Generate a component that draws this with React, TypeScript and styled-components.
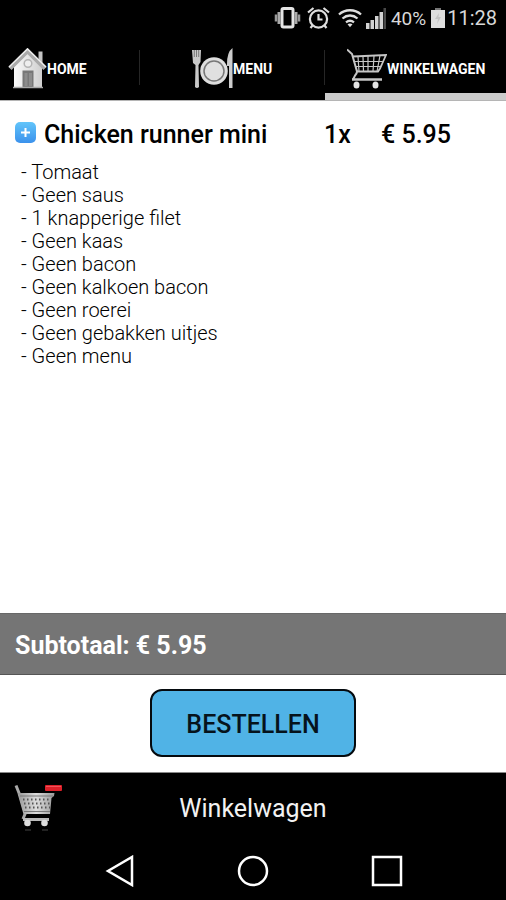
import React from "react";
import styled, { createGlobalStyle } from "styled-components";

const GlobalStyle = createGlobalStyle`
  *, *::before, *::after { box-sizing: border-box; }
  body { margin: 0; background: #fff; font-family: Roboto, "Liberation Sans", sans-serif; }
  button { font: inherit; padding: 0; border: 0; background: none; color: inherit; cursor: pointer; }
  svg { display: block; flex: none; }
  h1, h2, ul, p { margin: 0; padding: 0; }
`;

const Screen = styled.div`
  display: flex;
  flex-direction: column;
  min-height: 100vh;
  background: #fff;
  color: #000;
`;

const StatusBar = styled.div`
  display: flex;
  align-items: center;
  justify-content: flex-end;
  height: 36px;
  padding-right: 9px;
  background: #000;
  color: #d8d8d8;
  font-size: 19px;
`;

const StatusItem = styled.span<{ $gap: number }>`
  margin-left: ${(p) => p.$gap}px;
`;

const Clock = styled.time`
  margin-left: 2px;
  font-size: 20px;
`;

const Tabs = styled.nav`
  display: grid;
  grid-template-columns: 140fr 185fr 181fr;
  height: 65px;
  background: #000;
  color: #fff;
  border-bottom: 1px solid #b5b5b5;
`;

const Tab = styled.button<{ $inset: number; $active?: boolean }>`
  display: flex;
  align-items: center;
  height: 64px;
  padding-left: ${(p) => p.$inset}px;
  border-bottom: 7px solid ${(p) => (p.$active ? "#cbcbcb" : "#000")};
  font-size: 14px;
  font-weight: 700;
  background: linear-gradient(#262626, #262626) right 14px / 1px 35px no-repeat #000;

  &:last-child {
    background: #000;
  }

  svg {
    margin-top: 8px;
  }

  span {
    margin-top: 8px;
  }
`;

const Order = styled.main`
  flex: 1;
  padding: 16px 15px;
`;

const ProductRow = styled.div`
  display: grid;
  grid-template-columns: 21px 272px 49px 1fr;
  column-gap: 8px;
  align-items: center;
  height: 34px;
  font-size: 25px;
  font-weight: 500;
`;

const ProductName = styled.h1`
  font-size: inherit;
  font-weight: inherit;
`;

const AddButton = styled.button`
  width: 21px;
  height: 21px;
  margin-bottom: 3px;
`;

const Options = styled.ul`
  padding: 10px 6px;
  list-style: none;
  font-size: 20px;
  font-weight: 300;
  line-height: 23px;
  color: #000;
`;

const Subtotal = styled.div`
  display: flex;
  align-items: center;
  height: 62px;
  padding: 3px 15px 0;
  background: #757575;
  border-top: 1px solid #686868;
  border-bottom: 1px solid #555;
  color: #fff;
  font-size: 25px;
  font-weight: 700;
`;

const Actions = styled.div`
  display: flex;
  justify-content: center;
  padding: 14px 0 15px;
`;

const OrderButton = styled.button`
  height: 68px;
  padding: 2px 34px 0;
  border: 2px solid #050a0e;
  border-radius: 12px;
  background: #50b3e6;
  color: #06131c;
  font-size: 25px;
  font-weight: 500;
`;

const TitleBar = styled.footer`
  display: grid;
  grid-template-columns: 64px 1fr 64px;
  align-items: center;
  height: 71px;
  background: #000;
  border-top: 1px solid #888;
  color: #f2f2f2;
`;

const CartButton = styled.button`
  padding-left: 14px;
`;

const PageTitle = styled.h2`
  text-align: center;
  font-size: 25px;
  font-weight: 400;
`;

const SystemNav = styled.nav`
  display: flex;
  justify-content: center;
  gap: 102px;
  height: 57px;
  background: #000;
  color: #fff;
`;

const SystemButton = styled.button`
  display: flex;
  align-items: center;
  height: 56px;
`;

const options = [
  "Tomaat",
  "Geen saus",
  "1 knapperige filet",
  "Geen kaas",
  "Geen bacon",
  "Geen kalkoen bacon",
  "Geen roerei",
  "Geen gebakken uitjes",
  "Geen menu",
];

const VibrateIcon = () => (
  <svg width="27" height="22" viewBox="0 0 27 22" aria-hidden="true">
    <rect x="8" y="1.5" width="11" height="18.5" rx="1.5" fill="none" stroke="#e4e4e4" strokeWidth="3" />
    <path d="M5 5v12M22 5v12" stroke="#aaa" strokeWidth="3" />
    <path d="M2 7.500v7M25 7.500v7" stroke="#999" strokeWidth="2.500" />
  </svg>
);

const AlarmIcon = () => (
  <svg width="23" height="22" viewBox="0 0 23 22" fill="none" stroke="#dedede" strokeWidth="2.2" aria-hidden="true">
    <circle cx="11.5" cy="12" r="8.6" />
    <path d="M1 5.5 6.5 1M22 5.5 16.500 1M11.500 7v5.500h4M5.500 18.500 3.500 21M17.500 18.500l2 2.500" />
  </svg>
);

const WifiIcon = () => (
  <svg width="24" height="20" viewBox="0 0 24 20" fill="none" stroke="#dedede" strokeWidth="2.3" aria-hidden="true">
    <path d="M1 6.500C7 .8 17 .8 23 6.500M4.500 10.500c4.500-4 10.500-4 15 0M8 14.300c2.500-2 5.500-2 8 0" />
    <path d="m9.500 16.200 2.500 3 2.500-3q-2.500-1.500-5 0Z" fill="#dedede" stroke="none" />
  </svg>
);

const SignalIcon = () => (
  <svg width="20" height="21" viewBox="0 0 20 21" aria-hidden="true">
    <path d="M0 15h3.500v6H0zM4.500 12H8v9H4.500zM9 8h3.500v13H9zM13.500 4H17v17h-3.500z" fill="#d2d2d2" />
    <path d="M17.500 0H20v21h-2.500z" fill="#484848" />
  </svg>
);

const BatteryIcon = () => (
  <svg width="14" height="20" viewBox="0 0 14 20" aria-hidden="true">
    <path d="M4 0h6v3H4z" fill="#777" />
    <path d="M0 2h14v18H0z" fill="#dedede" />
    <path d="M8 5 4 11h3l-1 5 4-7H7.500Z" fill="#c4c4c4" />
  </svg>
);

const HouseIcon = () => (
  <svg width="39" height="41" viewBox="0 0 39 41" aria-hidden="true">
    <defs>
      <linearGradient id="wall" x2="1">
        <stop stopColor="#fafafa" />
        <stop offset="1" stopColor="#cfcfcf" />
      </linearGradient>
    </defs>
    <path d="M30.500 3.500h4v12h-4z" fill="#c4c4c4" />
    <path d="M6 18 19.500 5 34 19v20.500H6Z" fill="url(#wall)" />
    <path d="M2 20.500 19.500 3 37 20.500" fill="none" stroke="#aaa" strokeWidth="4.500" />
    <path d="M1 19 19.500 1 38 19" fill="none" stroke="#eee" strokeWidth="1.500" />
    <circle cx="20" cy="15.500" r="3.800" fill="#eee" stroke="#b4b4b4" strokeWidth="1.500" />
    <path d="M14.500 22.500h11v17h-11z" fill="#777" />
    <path d="M16.500 25h3v13h-3zM21 25h3v13h-3z" fill="#8c8c8c" />
    <path d="M5 39.500h30" stroke="#aaa" strokeWidth="1.500" />
  </svg>
);

const PlateIcon = () => (
  <svg width="41" height="41" viewBox="0 0 41 41" aria-hidden="true">
    <path d="M0 2h9l-.5 12L6.500 17 7 39q-2 2-4 0l.5-22L1 15Z" fill="#c9c9c9" />
    <path d="M2.300 2v7M4.500 2v7M6.700 2v7" stroke="#666" strokeWidth=".8" />
    <circle cx="22" cy="23" r="13.800" fill="#dedede" />
    <circle cx="22" cy="23" r="10" fill="#e0e0e0" stroke="#777" strokeWidth="1.500" />
    <path d="M35 16q0-12 5.500-16v40H37V18h-2Z" fill="#ccc" />
  </svg>
);

const WireCartIcon = () => (
  <svg width="40" height="41" viewBox="0 0 40 41" fill="none" stroke="#c6c6c6" aria-hidden="true">
    <path d="M0 1.500 5 6l5 17.500q0 2-2 4l-2 4" strokeWidth="2" />
    <path d="M6 8.500 39 7q-3 7-6 13.500l-2 3H9" strokeWidth="1.800" />
    <path d="M8 13.500h28M9 18.500h25M11 8.500l1 15M16 8.500l.5 15M21 8v15.500M27 8l-1 15.500M33 7.500l-3 16" strokeWidth="1.200" />
    <path d="M5 31.500h30" strokeWidth="2.500" />
    <ellipse cx="9.500" cy="37" rx="3" ry="3.600" fill="#e4e4e4" stroke="none" />
    <ellipse cx="28.500" cy="37" rx="3" ry="3.600" fill="#e4e4e4" stroke="none" />
  </svg>
);

const PlusIcon = () => (
  <svg width="21" height="21" viewBox="0 0 21 21" aria-hidden="true">
    <defs>
      <linearGradient id="plus" x2="0" y2="1">
        <stop stopColor="#62c5fa" />
        <stop offset="1" stopColor="#3b91ec" />
      </linearGradient>
    </defs>
    <rect width="21" height="21" rx="5" fill="url(#plus)" />
    <path d="M10.500 6v9M6 10.500h9" stroke="#fff" strokeWidth="2" />
  </svg>
);

const FullCartIcon = () => (
  <svg width="48" height="48" viewBox="0 0 48 48" aria-hidden="true">
    <defs>
      <linearGradient id="basket">
        <stop stopColor="#999" />
        <stop offset=".5" stopColor="#ddd" />
        <stop offset="1" stopColor="#999" />
      </linearGradient>
    </defs>
    <path d="M2 1.500 5 9l6 21-2 5" fill="none" stroke="#a9a9a9" strokeWidth="3" />
    <path d="M4 9h36.500l-.5 3-2.500 2L36 30H10Z" fill="url(#basket)" />
    <path d="M9 15.500h28M10 19.500h26M11 23.500h25" fill="none" stroke="#555" strokeWidth="2" strokeDasharray="1.500 2.500" />
    <path d="M6 12h33M10 27.500h26" stroke="#777" strokeWidth="1" />
    <path d="M9 35.500h26" stroke="#bababa" strokeWidth="3" />
    <circle cx="13.500" cy="39" r="3.300" fill="#ddd" />
    <circle cx="30.500" cy="39" r="3.300" fill="#ddd" />
    <path d="M11 46h6M28 46h6" stroke="#222" strokeWidth="2" />
    <rect x="31" y="1" width="17" height="6" rx="1" fill="#dc2029" />
    <path d="M32 2.500h15" stroke="#f0535a" />
  </svg>
);

export default function App() {
  return (
    <Screen>
      <GlobalStyle />
      <StatusBar>
        <VibrateIcon />
        <StatusItem $gap={6}><AlarmIcon /></StatusItem>
        <StatusItem $gap={8}><WifiIcon /></StatusItem>
        <StatusItem $gap={4}><SignalIcon /></StatusItem>
        <StatusItem $gap={5}>40%</StatusItem>
        <StatusItem $gap={5}><BatteryIcon /></StatusItem>
        <Clock>11:28</Clock>
      </StatusBar>
      <Tabs>
        <Tab $inset={8}><HouseIcon /><span>HOME</span></Tab>
        <Tab $inset={52}><PlateIcon /><span>MENU</span></Tab>
        <Tab $inset={22} $active aria-current="page"><WireCartIcon /><span>WINKELWAGEN</span></Tab>
      </Tabs>
      <Order>
        <ProductRow>
          <AddButton aria-label="Toevoegen"><PlusIcon /></AddButton>
          <ProductName>Chicken runner mini</ProductName>
          <span>1x</span>
          <span>€ 5.95</span>
        </ProductRow>
        <Options>
          {options.map((o) => (
            <li key={o}>- {o}</li>
          ))}
        </Options>
      </Order>
      <Subtotal>Subtotaal: € 5.95</Subtotal>
      <Actions>
        <OrderButton>BESTELLEN</OrderButton>
      </Actions>
      <TitleBar>
        <CartButton aria-label="Winkelwagen legen"><FullCartIcon /></CartButton>
        <PageTitle>Winkelwagen</PageTitle>
      </TitleBar>
      <SystemNav>
        <SystemButton aria-label="Terug">
          <svg width="32" height="32" viewBox="0 0 32 32" fill="none" stroke="currentColor" strokeWidth="2.500">
            <path d="M29 2v28L5 16Z" />
          </svg>
        </SystemButton>
        <SystemButton aria-label="Start">
          <svg width="32" height="32" viewBox="0 0 32 32" fill="none" stroke="currentColor" strokeWidth="2.500">
            <circle cx="16" cy="16" r="14" />
          </svg>
        </SystemButton>
        <SystemButton aria-label="Recent">
          <svg width="32" height="32" viewBox="0 0 32 32" fill="none" stroke="currentColor" strokeWidth="2.500">
            <path d="M2 2h28v28H2Z" />
          </svg>
        </SystemButton>
      </SystemNav>
    </Screen>
  );
}
